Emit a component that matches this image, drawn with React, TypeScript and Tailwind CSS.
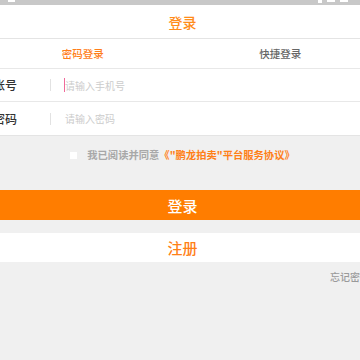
export default function App() {
  return (
    <div
      className="w-[360px] h-[360px] overflow-hidden bg-[#f0f0f0]"
      style={{ fontFamily: '"Noto Sans CJK SC", "Noto Sans", sans-serif' }}
    >
      <div className="w-[395px] -ml-[16px]">
        {/* status bar edge */}
        <div className="relative h-[5px] bg-[#c8c8c8]">
          <div className="absolute left-[24px] top-0 w-[7px] h-[2px] bg-white" />
          <div className="absolute left-[334px] top-0 w-[4px] h-[3px] bg-white" />
          <div className="absolute left-[343px] top-0 w-[8px] h-[2px] bg-white" />
          <div className="absolute left-[356px] top-0 w-[8px] h-[2px] bg-white" />
        </div>

        <div className="h-[34px] bg-white border-b border-[#e4e4e4] flex items-center justify-center">
          <span className="text-[14px] leading-none font-medium text-[#ff8c1a] pl-[2px]">登录</span>
        </div>

        <div className="h-[30px] bg-white border-b border-[#e8e8e8] flex items-center">
          <div className="flex-1 text-center text-[10.5px] font-medium text-[#ff7e1a]">密码登录</div>
          <div className="flex-1 text-center text-[10.5px] font-medium text-[#666]">快捷登录</div>
        </div>

        <div className="h-[33px] bg-white border-b border-[#e8e8e8] flex items-center">
          <div className="w-[66px] pl-[9px] text-[12px] font-medium text-[#333]">账号</div>
          <div className="w-px h-[12px] bg-[#e2e2e2]" />
          <div className="ml-[13px] flex items-center">
            <span className="w-px h-[14px] bg-[#f06a9a]" />
            <span className="text-[10px] text-[#cccccc]">请输入手机号</span>
          </div>
        </div>

        <div className="h-[34px] bg-white border-b border-[#e4e4e4] flex items-center">
          <div className="w-[66px] pl-[9px] text-[12px] font-medium text-[#333]">密码</div>
          <div className="w-px h-[12px] bg-[#e2e2e2]" />
          <span className="ml-[14px] text-[10px] text-[#cccccc]">请输入密码</span>
        </div>

        <div className="h-[54px] pt-[12px] flex justify-center">
          <div className="h-[14px] flex items-center pl-[2px]">
            <span className="w-[7px] h-[7px] bg-white mr-[10px]" />
            <span className="text-[10.3px] font-bold text-[#a8a8a8]">我已阅读并同意</span>
            <span className="text-[10.3px] font-bold text-[#ff8018]">《"鹏龙拍卖"平台服务协议》</span>
          </div>
        </div>

        <div className="h-[30px] bg-[#ff7d00] flex items-center justify-center">
          <span className="text-[15px] leading-none font-medium text-white pl-[2px]">登录</span>
        </div>

        <div className="h-[13px]" />

        <div className="h-[29px] bg-white flex items-center justify-center">
          <span className="text-[15px] leading-none font-medium text-[#ff8018] pl-[2px]">注册</span>
        </div>

        <div className="pt-[9px] pr-[9px] text-right text-[10px] leading-[12px] font-medium text-[#9a9a9a]">忘记密码</div>
      </div>
    </div>
  );
}
